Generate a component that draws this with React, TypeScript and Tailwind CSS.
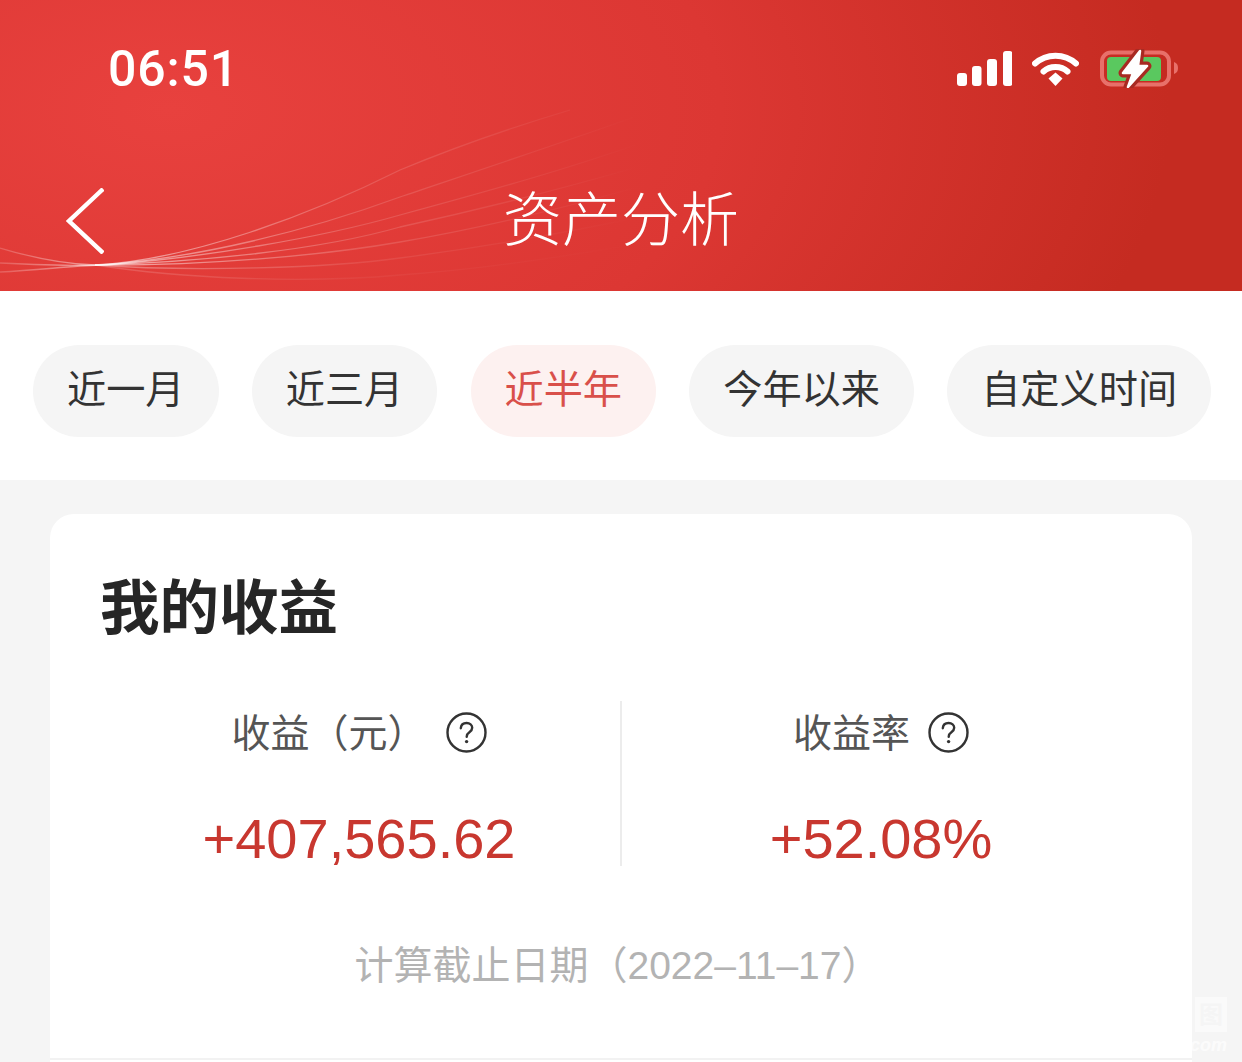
const cjk = "font-['Liberation_Sans','Noto_Sans_CJK_SC',sans-serif]"

const ranges = [
  { label: '近一月', active: false },
  { label: '近三月', active: false },
  { label: '近半年', active: true },
  { label: '今年以来', active: false },
  { label: '自定义时间', active: false },
]

const HelpIcon = () => (
  <svg width="41" height="41" viewBox="0 0 41 41" fill="none" className="shrink-0">
    <circle cx="20.5" cy="20.5" r="19" stroke="#333" strokeWidth="2.4" />
    <path d="M14.8 16.2c.3-3.4 2.7-5.2 5.8-5.2 3.2 0 5.6 1.9 5.6 4.8 0 2.2-1.1 3.3-2.8 4.5-1.9 1.3-2.7 2.2-2.7 4.4" stroke="#333" strokeWidth="2.4" strokeLinecap="round" />
    <circle cx="20.6" cy="29.6" r="1.7" fill="#333" />
  </svg>
)

const StatusIcons = () => (
  <div className="flex items-center">
    <svg width="55" height="35" viewBox="0 0 55 35" fill="white">
      <rect x="0" y="22" width="10" height="13" rx="3" />
      <rect x="15" y="15" width="9.5" height="20" rx="3" />
      <rect x="30" y="8" width="10" height="27" rx="3" />
      <rect x="46" y="0" width="9.5" height="35" rx="3" />
    </svg>
    <svg width="47" height="35" viewBox="0 0 47 35" fill="none" className="ml-[20px]">
      <path d="M3 12.5C14.5 2 32.5 2 44 12.5" stroke="white" strokeWidth="6" strokeLinecap="round" />
      <path d="M11.5 20.5C18 14.5 29 14.5 35.5 20.5" stroke="white" strokeWidth="6" strokeLinecap="round" />
      <path d="M16.5 27.5 23.5 21.6 30.5 27.5 23.5 35Z" fill="white" />
    </svg>
    <svg width="78" height="39" viewBox="0 0 78 39" fill="none" className="ml-[21px]">
      <rect x="2" y="3.5" width="67" height="32" rx="9" stroke="#e8706a" strokeWidth="4" />
      <rect x="7" y="8" width="54" height="24" rx="4" fill="#5ac85f" />
      <path d="M74 13c3 1 4 3 4 6s-1 5-4 6Z" fill="#e8706a" />
      <path d="M40 2 23 24H33L28 38 47 17H38Z" fill="#a82a22" stroke="#a82a22" strokeWidth="9" strokeLinejoin="round" />
      <path d="M40 2 23 24H33L28 38 47 17H38Z" fill="white" stroke="white" strokeWidth="2.5" strokeLinejoin="round" />
    </svg>
  </div>
)

// thin decorative lines behind the nav bar, fading out to the right
const Curves = () => (
  <svg width="1242" height="291" viewBox="0 0 1242 291" fill="none" className="absolute left-0 top-0 pointer-events-none">
    <defs>
      <linearGradient id="fade" gradientUnits="userSpaceOnUse" x1="0" y1="0" x2="800" y2="0">
        <stop offset="0" stopColor="white" stopOpacity=".18" />
        <stop offset=".14" stopColor="white" stopOpacity=".55" />
        <stop offset=".45" stopColor="white" stopOpacity=".16" />
        <stop offset=".8" stopColor="white" stopOpacity="0" />
      </linearGradient>
    </defs>
    <g stroke="url(#fade)" strokeWidth="1.3">
      <path d="M0 248C30 257 60 264 95 265 190 260 310 215 400 170 460 145 520 125 570 110" />
      <path d="M0 272C40 270 70 266 100 265 200 258 310 230 400 197 480 170 570 140 640 115" />
      <path d="M0 263C40 265 80 266 105 265 200 258 320 238 400 215 500 188 600 160 690 125" />
      <path d="M95 265C200 262 320 250 400 227 500 205 620 175 740 135" />
      <path d="M95 265C200 266 320 256 400 242 500 225 620 195 760 150" />
      <path d="M95 265C190 272 330 268 400 258 500 245 620 225 780 185" strokeOpacity=".6" />
      <path d="M95 265C180 278 300 284 400 275 500 268 620 250 780 215" strokeOpacity=".3" />
    </g>
  </svg>
)

export default function App() {
  return (
    <div className={`relative w-[1242px] h-[1062px] overflow-hidden bg-[#f5f5f5] ${cjk}`}>
      <header className="relative h-[291px] bg-[radial-gradient(ellipse_1000px_560px_at_170px_110px,#e8413e_0%,#dc3733_55%,#c52b21_100%)]">
        <Curves />
        <div className="relative flex h-[136px] items-center justify-between pl-[108px] pr-[64px]">
          <span className="mt-[2px] font-['Roboto',sans-serif] font-medium text-[50px] tracking-[0.8px] leading-none text-white">06:51</span>
          <StatusIcons />
        </div>
        <div className="relative box-border grid h-[155px] grid-cols-[1fr_auto_1fr] items-center px-[66px] pt-[15px]">
          <svg width="38" height="66" viewBox="0 0 38 66" fill="none">
            <path d="M35.5 2.5 3 33l32.5 30.5" stroke="white" strokeWidth="4.4" strokeLinecap="square" />
          </svg>
          <h1 className="text-[59px] font-light leading-none text-white">资产分析</h1>
          <div />
        </div>
      </header>

      <nav className="flex h-[189px] items-center gap-[33.2px] bg-white pl-[33px] pt-[10px]">
        {ranges.map((r) => (
          <div
            key={r.label}
            className={`flex h-[92px] items-center rounded-full px-[34px] text-[39.2px] ${
              r.active ? 'bg-[#fdf1f0] text-[#d9504a]' : 'bg-[#f5f5f5] text-[#333333]'
            }`}
          >
            {r.label}
          </div>
        ))}
      </nav>

      <section className="mx-[50px] mt-[34px] rounded-t-[24px] bg-white pb-[20px]">
        <h2 className="pl-[50px] pt-[65px] text-[59.5px] font-bold leading-[60px] text-[#262626]">我的收益</h2>
        <div className="mt-[62px] flex h-[165px] pl-[48px] pr-[52px]">
          <div className="flex w-[524px] flex-col items-center border-r-[2px] border-[#ececec]">
            <div className="flex h-[62px] items-center text-[39px] text-[#555555]">
              <span className="pt-[4px]">收益（元）</span>
              <span className="ml-[19px]"><HelpIcon /></span>
            </div>
            <div className="mt-[49px] font-['Liberation_Sans',sans-serif] text-[56px] leading-[54px] text-[#c8372f]">+407,565.62</div>
          </div>
          <div className="flex flex-1 flex-col items-center">
            <div className="flex h-[62px] items-center text-[39px] text-[#555555]">
              <span className="pt-[4px]">收益率</span>
              <span className="ml-[18px]"><HelpIcon /></span>
            </div>
            <div className="mt-[49px] font-['Liberation_Sans',sans-serif] text-[56px] leading-[54px] text-[#c8372f]">+52.08%</div>
          </div>
        </div>
        <p className="mt-[70px] pr-[7px] text-center text-[39px] leading-[60px] text-[#b3b3b3]">计算截止日期（2022–11–17）</p>
        <div className="mt-[62px] h-[2px] bg-[#f2f2f2]" />
      </section>

      {/* faint watermark in the corner */}
      <div className="absolute left-[1195px] top-[997px] flex h-[35px] w-[32px] items-center justify-center bg-white/50 text-[24px] font-bold leading-none text-[#f5f5f5]">图</div>
      <div className="absolute left-[1190px] top-[1036px] text-[18px] font-bold italic leading-none text-white/70">com</div>
    </div>
  )
}
